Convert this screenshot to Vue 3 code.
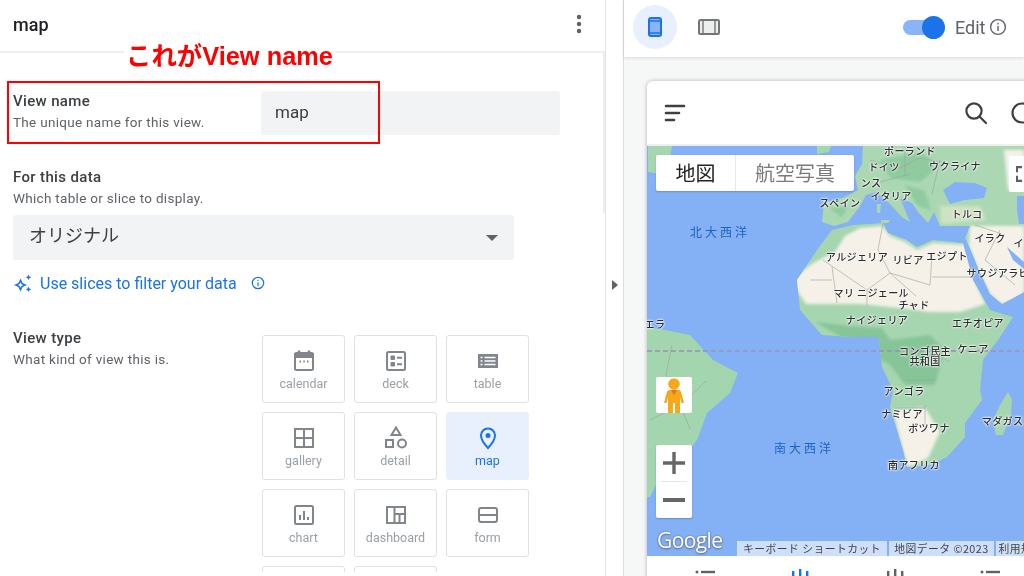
<template>
  <div class="page">
    <section class="editor">
      <header class="editor-head">
        <h1>map</h1>
        <svg class="more" width="6" height="20" viewBox="0 0 6 20"><circle cx="3" cy="3" r="2.2" /><circle cx="3" cy="10" r="2.2" /><circle cx="3" cy="17" r="2.2" /></svg>
      </header>
      <div class="scrollthumb"></div>
      <div class="editor-body">
        <div class="row name-row">
          <div class="field-text">
            <div class="label">View name</div>
            <div class="desc">The unique name for this view.</div>
          </div>
          <div class="input">map</div>
        </div>

        <div class="data-block">
          <div class="label">For this data</div>
          <div class="desc">Which table or slice to display.</div>
          <div class="select">
            <span>オリジナル</span>
            <i class="caret"></i>
          </div>
          <div class="link">
            <svg width="20" height="20" viewBox="0 0 20 20" fill="#1a73e8">
              <path d="M7.5 5.5 9.6 10l4.4 2-4.4 2-2.1 4.500L5.4 14 1 12l4.4-2zM7.5 9.3 6.700 11l-1.800 1 1.800.9.8 1.800.8-1.800 1.800-.9-1.800-1z" />
              <path d="M15.500 1.500l.9 1.900 1.900.9-1.900.9-.9 1.900-.9-1.900-1.900-.9 1.900-.9zM15.500 13.500l.9 1.900 1.900.9-1.900.9-.9 1.900-.9-1.900-1.900-.9 1.900-.9z" />
            </svg>
            <span class="link-text">Use slices to filter your data</span>
            <svg class="link-info" width="14" height="14" viewBox="0 0 14 14" fill="none" stroke="#1a73e8" stroke-width="1.2"><circle cx="7" cy="7" r="5.700" /><path d="M7 6.200V10.200M7 3.800v1.200" /></svg>
          </div>
        </div>

        <div class="row type-row">
          <div class="field-text type-text">
            <div class="label">View type</div>
            <div class="desc">What kind of view this is.</div>
          </div>
          <div class="tiles">
            <div v-for="t in tiles" :key="t.name" class="tile" :class="{ active: t.name === 'map', stub: !t.icon }">
              <svg width="24" height="24" viewBox="0 0 24 24" fill="none" stroke="currentColor" stroke-width="2" v-html="t.icon"></svg>
              <span v-if="t.icon">{{ t.name }}</span>
            </div>
          </div>
        </div>
      </div>
    </section>

    <div class="splitter"><i></i></div>

    <section class="preview">
      <div class="toolbar">
        <div class="device on">
          <svg width="14" height="20" viewBox="0 0 14 20"><rect x="1" y="1" width="12" height="18" rx="2" fill="#8ab4f8" stroke="#1a73e8" stroke-width="2" /><path d="M1 4h12M1 16h12" stroke="#1a73e8" stroke-width="1.400" /></svg>
        </div>
        <div class="device">
          <svg width="22" height="16" viewBox="0 0 22 16"><rect x="1" y="1" width="20" height="14" rx="1.500" fill="#eceded" stroke="#757575" stroke-width="2" /><path d="M5 1v14M17 1v14" stroke="#757575" stroke-width="1.400" /></svg>
        </div>
        <div class="edit-toggle">
          <div class="switch"><i></i></div>
          <span>Edit</span>
          <svg width="18" height="18" viewBox="0 0 18 18" fill="none" stroke="#5f6368" stroke-width="1.400"><circle cx="9" cy="9" r="7.400" /><path d="M9 8v5M9 4.800v1.600" /></svg>
        </div>
      </div>

      <div class="stage">
        <div class="phone">
          <div class="phone-head">
            <svg width="22" height="18" viewBox="0 0 22 18" stroke="#3c4043" stroke-width="2.600" stroke-linecap="round"><path d="M2 2h18M2 9h13M2 16h8" /></svg>
            <svg class="search" width="26" height="26" viewBox="0 0 26 26" fill="none" stroke="#3c4043" stroke-width="2.200"><circle cx="11" cy="11" r="7.600" /><path d="M16.500 16.500 23 23" stroke-linecap="round" /></svg>
            <svg class="sync" width="24" height="24" viewBox="0 0 24 24" fill="none" stroke="#3c4043" stroke-width="2.200"><circle cx="12" cy="12" r="9.500" /></svg>
          </div>

          <div class="map">
            <svg class="map-art" width="377" height="410" viewBox="647 146 377 410">
              <defs>
                <filter id="soft" x="-20%" y="-20%" width="140%" height="140%"><feGaussianBlur stdDeviation="1.800" /></filter>
                <clipPath id="africa">
                  <path d="M832 230 853 225 883 223 888 233 907 240 917 247 933 240 963 243 967 258 973 280 990 310 1013 317 998 340 983 360 980 390 982 400 965 423 965 437 947 457 930 465 907 467 903 450 890 407 893 390 882 367 880 347 878 337 850 337 822 335 800 310 797 280 817 250z" />
                </clipPath>
                <clipPath id="eurasia">
                  <path d="M863 146H1024V292L1002 304 990 294 978 268 969 246 965 238 970 226 940 226 934 212 928 223 918 212 912 203 900 198 910 222 902 217 888 202 876 192 866 195 860 206 848 222 834 226 822 222 824 203 845 197 858 190 855 176 862 164z" />
                </clipPath>
              </defs>
              <rect x="647" y="146" width="377" height="410" fill="#84b0f5" />
              <!-- uk and ireland -->
              <path d="M817 146h14l-2 6-12 2zM648 146h24l-3 18-8 10-13-2z" fill="#a6d6b0" />
              <!-- europe, turkey, arabia -->
              <path d="M863 146H1024V292L1002 304 990 294 978 268 969 246 965 238 970 226 940 226 934 212 928 223 918 212 912 203 900 198 910 222 902 217 888 202 876 192 866 195 860 206 848 222 834 226 822 222 824 203 845 197 858 190 855 176 862 164z" fill="#abd8b3" />
              <g clip-path="url(#eurasia)">
                <g filter="url(#soft)">
                  <path d="M880 160l40-8 20 14-20 16-30-4zM905 185l20 6 6 20-14-6zM830 208l18-2-6 12z" fill="#8fcb9f" />
                  <path d="M940 206h40l6 14-45 4z" fill="#cfe3c2" />
                  <path d="M970 226h54v70l-22 8-12-10-12-26-9-22zM1004 150h20v40h-16z" fill="#f5f1e8" />
                </g>
              </g>
              <!-- black sea, caspian, gulf -->
              <path d="M943 190 955 182 975 183 987 188 984 198 965 200 950 204z" fill="#84b0f5" />
              <path d="M1017 196h7v28h-5l-2-14z" fill="#84b0f5" />
              <path d="M1007 247 1024 262V269L1013 260z" fill="#84b0f5" />
              <path d="M877 204h4l-1 9h-3zM881 220h9l-2 3h-7z" fill="#abd8b3" />
              <!-- africa -->
              <path d="M832 230 853 225 883 223 888 233 907 240 917 247 933 240 963 243 967 258 973 280 990 310 1013 317 998 340 983 360 980 390 982 400 965 423 965 437 947 457 930 465 907 467 903 450 890 407 893 390 882 367 880 347 878 337 850 337 822 335 800 310 797 280 817 250z" fill="#a6d6b0" />
              <g clip-path="url(#africa)">
                <g filter="url(#soft)">
                  <path d="M845 236 860 228 882 226 890 236 907 243 917 250 933 243 965 245 970 262 975 282 985 304 960 312 930 312 900 308 860 304 835 304 806 304 790 280 815 262 835 252z" fill="#f5f1e8" />
                  <path d="M815 322 850 326 882 328 890 340 930 335 945 350 935 385 905 385 890 365z" fill="#86c597" />
                  <path d="M893 410 925 408 940 432 928 458 908 467 903 450z" fill="#f5f1e8" />
                </g>
              </g>
              <path d="M1008 392 1012 400 1011 415 1003 435 996 435 993 420 1000 405z" fill="#a6d6b0" />
              <!-- south america -->
              <path d="M647 327 665 330 690 335 713 360 738 373 730 393 707 413 697 440 683 457 657 483 650 497 647 497z" fill="#a3d5ae" />
              <!-- borders -->
              <g fill="none" stroke="#97a29b" stroke-width=".6">
                <path d="M823 260 867 290 890 273 930 285 932 255M932 277H970M832 267 837 303M867 290V306M890 273 916 296M883 223 878 250 890 273M810 280H832M905 380h30M895 408h30M925 405v24M930 350l20 12M672 345l-6 30 24 22 16-16M650 420l30-15 10 24" />
                <path d="M870 160l30 8 20-10 30 6M880 182l30-8M905 150v26M940 160l-8 34M1000 230l-15 30 30 25M975 225l30 10" />
              </g>
              <path d="M647 351H1024" stroke="#9c8eb3" stroke-width="1.300" stroke-dasharray="5 3" />
            </svg>

            <span
              v-for="l in placeLabels"
              :key="l.text"
              class="place"
              :style="{ left: l.x + 'px', top: l.y + 'px' }"
            >{{ l.text }}</span>
            <span class="ocean" :style="{ left: '73px', top: '85px' }">北大西洋</span>
            <span class="ocean" :style="{ left: '157px', top: '301px' }">南大西洋</span>

            <div class="map-type">
              <span class="cur">地図</span>
              <span>航空写真</span>
            </div>
            <div class="fullscreen">
              <svg width="15" height="18" viewBox="0 0 15 18" fill="none" stroke="#5f5f5f" stroke-width="2.600"><path d="M1 7V1h6M1 11v6h6" /></svg>
            </div>
            <div class="pegman">
              <svg width="20" height="35" viewBox="0 0 20 35" fill="#f4a91d"><circle cx="10" cy="6" r="5.800" /><path d="M5.500 12h9q2 0 2.600 2L20 25h-2.600L16 19.500V35h-5V25H9v10H4V19.500L2.600 25H0l2.900-11q.6-2 2.600-2z" /><path d="M7 12h6l-3 5z" fill="#e5702a" /></svg>
            </div>
            <div class="zoom">
              <svg width="22" height="22" viewBox="0 0 22 22" fill="#666"><path d="M9.300 0h3.400v9.300H22v3.400h-9.300V22H9.300v-9.300H0V9.300h9.300z" /></svg>
              <i></i>
              <svg width="22" height="22" viewBox="0 0 22 22" fill="#666"><rect y="9" width="22" height="4" /></svg>
            </div>
            <div class="google">Google</div>
            <div class="attrib">
              <span class="a1">キーボード ショートカット</span>
              <span class="a2">地図データ ©2023</span>
              <span class="a3">利用規約</span>
            </div>
          </div>

          <div class="tabs">
            <svg width="20" height="20" viewBox="0 0 20 20" fill="#5f6368"><circle cx="2" cy="3" r="1.500" /><rect x="6" y="1.800" width="14" height="2.400" /></svg>
            <svg width="20" height="20" viewBox="0 0 20 20" fill="#1a73e8"><rect x="2" y="2" width="2.400" height="9" /><rect x="9" y="0" width="2.400" height="9" /><rect x="16" y="2" width="2.400" height="9" /></svg>
            <svg width="20" height="20" viewBox="0 0 20 20" fill="#5f6368"><rect x="2" y="2" width="2.400" height="9" /><rect x="9" y="0" width="2.400" height="9" /><rect x="16" y="2" width="2.400" height="9" /></svg>
            <svg width="20" height="20" viewBox="0 0 20 20" fill="#5f6368"><circle cx="2" cy="3" r="1.500" /><rect x="6" y="1.800" width="14" height="2.400" /></svg>
          </div>
        </div>
      </div>
    </section>

    <div class="note">これがView name</div>
    <div class="note-box"></div>
  </div>
</template>

<script setup>
const tiles = [
  { name: 'calendar', icon: '<rect x="3" y="4" width="18" height="17" rx="1.500"/><path d="M7 1.500V5M17 1.500V5" stroke-width="2.500"/><path d="M3 5h18v3H3z" fill="currentColor"/><path d="M7.500 12.500h1.500M11.300 12.500h1.500M15 12.500h1.500" />' },
  { name: 'deck', icon: '<rect x="3" y="3" width="18" height="18" rx="1.500"/><path d="M7 7h3.500v3.500H7zM7 13.500h3.500V17H7z" fill="currentColor" stroke-width="1"/><path d="M13 8.700h5M13 15.200h5" />' },
  { name: 'table', icon: '<rect x="2" y="5" width="20" height="14" fill="currentColor" stroke="none"/><path d="M8.500 8.500h11M8.500 12h11M8.500 15.500h11M4.500 8.500h2M4.500 12h2M4.500 15.500h2" stroke="#fff" stroke-width="1.500"/>' },
  { name: 'gallery', icon: '<rect x="3" y="3" width="18" height="18"/><path d="M12 3v18M3 12h18" />' },
  { name: 'detail', icon: '<path d="M12 1.500 16.500 9h-9z"/><rect x="2" y="14" width="7" height="7"/><circle cx="18" cy="17.500" r="4"/>' },
  { name: 'map', icon: '<path d="M12 2.500c-3.900 0-7 3-7 6.900 0 5 7 12.600 7 12.600s7-7.600 7-12.600c0-3.900-3.100-6.900-7-6.900z"/><circle cx="12" cy="9.500" r="2.500" fill="currentColor" stroke="none"/>' },
  { name: 'chart', icon: '<rect x="3" y="3" width="18" height="18" rx="1.500"/><path d="M8 12v5M12 8v9M16 14v3" />' },
  { name: 'dashboard', icon: '<rect x="3" y="4" width="18" height="16"/><path d="M10.500 4v16M10.500 11H21M15.500 11v9" />' },
  { name: 'form', icon: '<rect x="3" y="5" width="18" height="14" rx="2"/><path d="M3 12h18" />' },
  { name: 'more-a', icon: '' },
  { name: 'more-b', icon: '' }
];

const placeLabels = [
  { text: 'ポーランド', x: 263, y: 5 },
  { text: 'ドイツ', x: 237, y: 21 },
  { text: 'ウクライナ', x: 308, y: 20 },
  { text: 'ンス', x: 224, y: 37 },
  { text: 'イタリア', x: 244, y: 50 },
  { text: 'スペイン', x: 193, y: 57 },
  { text: 'トルコ', x: 320, y: 68 },
  { text: 'イラク', x: 343, y: 92 },
  { text: 'イラン', x: 382, y: 97 },
  { text: 'アルジェリア', x: 210, y: 111 },
  { text: 'リビア', x: 261, y: 114 },
  { text: 'エジプト', x: 300, y: 110 },
  { text: 'サウジアラビア', x: 356, y: 127 },
  { text: 'マリ', x: 197, y: 147 },
  { text: 'ニジェール', x: 236, y: 147 },
  { text: 'チャド', x: 267, y: 159 },
  { text: 'ナイジェリア', x: 230, y: 174 },
  { text: 'エチオピア', x: 331, y: 177 },
  { text: 'エラ', x: 8, y: 178 },
  { text: 'コンゴ民主\n共和国', x: 278, y: 210 },
  { text: 'ケニア', x: 326, y: 203 },
  { text: 'アンゴラ', x: 257, y: 245 },
  { text: 'ナミビア', x: 255, y: 268 },
  { text: 'ボツワナ', x: 282, y: 282 },
  { text: '南アフリカ', x: 267, y: 319 },
  { text: 'マダガスカル', x: 366, y: 275 }
];
</script>

<style>
html, body { margin: 0; background: #fff; }
</style>

<style scoped>
.page {
  position: relative;
  display: flex;
  width: 1024px;
  height: 576px;
  overflow: hidden;
  background: #fff;
  font-family: Roboto, "Noto Sans CJK JP", sans-serif;
  color: #3c4043;
  filter: blur(.4px);
}

/* left panel */
.editor {
  position: relative;
  width: 605px;
  height: 576px;
  border-right: 1px solid #e3e4e6;
  flex: none;
}
.editor-head {
  display: flex;
  align-items: center;
  justify-content: space-between;
  height: 53px;
  padding: 0 23px 3px 13px;
  box-sizing: border-box;
  border-bottom: 2px solid #eeeff0;
}
.editor-head h1 {
  margin: 0;
  font-size: 18px;
  font-weight: 500;
  color: #202124;
}
.more { fill: #5f6368; }
.scrollthumb {
  position: absolute;
  right: 0;
  top: 53px;
  width: 2px;
  height: 160px;
  background: #eceded;
}
.editor-body {
  height: 519px;
  padding: 38px 13px 0;
  box-sizing: border-box;
  overflow: hidden;
}
.row { display: flex; }
.field-text { width: 248px; flex: none; }
.label {
  font-size: 15px;
  line-height: 18px;
  font-weight: 500;
  letter-spacing: .35px;
  color: #3c4043;
  padding-top: 1px;
}
.desc {
  margin-top: 3px;
  font-size: 13.500px;
  line-height: 18px;
  letter-spacing: .3px;
  color: #5f6368;
}
.input {
  width: 299px;
  height: 44px;
  padding-left: 14px;
  box-sizing: border-box;
  border-radius: 3px;
  background: #f1f3f4;
  font-size: 17px;
  line-height: 42px;
  color: #3c4043;
}
.data-block { margin-top: 32px; }
.select {
  display: flex;
  align-items: center;
  justify-content: space-between;
  width: 501px;
  height: 45px;
  margin-top: 8px;
  padding: 0 16px 7px;
  box-sizing: border-box;
  border-radius: 3px;
  background: #f1f3f4;
  font-size: 18px;
  color: #3c4043;
}
.caret {
  width: 0;
  height: 0;
  border-left: 6px solid transparent;
  border-right: 6px solid transparent;
  border-top: 6px solid #5f6368;
  margin-top: 7px;
}
.link {
  display: flex;
  align-items: center;
  height: 20px;
  margin-top: 13px;
  color: #1a73e8;
  font-size: 16px;
}
.link-text { margin-left: 7px; }
.link-info { margin-left: 14px; }
.type-row { margin-top: 35px; }
.type-text { width: 249px; }
.tiles {
  display: grid;
  grid-template-columns: repeat(3, 83px);
  grid-auto-rows: 68px;
  gap: 9px;
  padding-top: 7px;
}
.tile {
  display: flex;
  flex-direction: column;
  align-items: center;
  padding-top: 13px;
  box-sizing: border-box;
  border: 1px solid #dfe1e3;
  border-radius: 3px;
  color: #80868b;
}
.tile span {
  margin-top: 3px;
  font-size: 12.500px;
  line-height: 16px;
  color: #9aa0a6;
}
.tile.active {
  background: #e8f0fe;
  border-color: #e8f0fe;
  color: #1a73e8;
}
.tile.active span { color: #1a73e8; }

.splitter {
  display: flex;
  align-items: center;
  justify-content: center;
  width: 17px;
  flex: none;
  background: #fff;
}
.splitter i {
  margin-left: 1px;
  border-top: 5px solid transparent;
  border-bottom: 5px solid transparent;
  border-left: 6px solid #5f6368;
  margin-top: -6px;
}

/* right panel */
.preview {
  flex: 1;
  min-width: 0;
  display: flex;
  flex-direction: column;
  border-left: 1px solid #dcdddf;
}
.toolbar {
  position: relative;
  display: flex;
  align-items: center;
  gap: 10px;
  height: 57px;
  padding: 0 0 3px 9px;
  box-sizing: border-box;
  box-shadow: 0 1px 3px rgba(60, 64, 67, .16);
}
.device {
  display: flex;
  align-items: center;
  justify-content: center;
  width: 44px;
  height: 44px;
  border-radius: 50%;
}
.device.on { background: #e8f0fe; }
.edit-toggle {
  display: flex;
  align-items: center;
  margin-left: 162px;
  font-size: 18px;
  color: #5f6368;
}
.edit-toggle span { margin-left: 18px; }
.edit-toggle svg { margin-left: 4px; }
.switch {
  position: relative;
  width: 34px;
  height: 15px;
  border-radius: 8px;
  background: #8ab4f8;
}
.switch i {
  position: absolute;
  right: -8px;
  top: -4px;
  width: 23px;
  height: 23px;
  border-radius: 50%;
  background: #1a73e8;
}
.stage {
  flex: 1;
  min-height: 0;
  padding: 24px 0 0 23px;
  background: #f6f7f7;
  overflow: hidden;
}
.phone {
  width: 420px;
  height: 500px;
  border-radius: 6px 0 0 0;
  background: #fff;
  box-shadow: 0 0 4px rgba(0, 0, 0, .28);
  overflow: hidden;
}
.phone-head {
  display: flex;
  align-items: center;
  height: 65px;
  padding: 0 0 0 17px;
  box-sizing: border-box;
  border-bottom: 2px solid #eeeff0;
}
.search { margin-left: 277px; }
.sync { margin-left: 21px; }

/* the map is a free canvas: everything in it is placed by map position */
.map {
  position: relative;
  width: 377px;
  height: 410px;
  overflow: hidden;
  background: #84b0f5;
}
.map-art { display: block; }
.place {
  position: absolute;
  transform: translate(-50%, -50%);
  white-space: pre;
  text-align: center;
  font-family: "Noto Sans CJK JP", sans-serif;
  font-size: 10px;
  font-weight: 500;
  letter-spacing: .4px;
  line-height: 10px;
  color: #2c2c2c;
  text-shadow: 0 0 2px #fff, 0 0 2px #fff, 0 0 3px #fff;
}
.ocean {
  position: absolute;
  transform: translate(-50%, -50%);
  white-space: nowrap;
  font-family: "Noto Sans CJK JP", sans-serif;
  font-size: 12px;
  letter-spacing: 3px;
  color: #1c62c4;
}
.map-type {
  position: absolute;
  left: 9px;
  top: 9px;
  display: flex;
  height: 36px;
  background: #fff;
  border-radius: 2px;
  font-family: "Noto Sans CJK JP", sans-serif;
  font-size: 20px;
  line-height: 36px;
  color: #7a7a7a;
  box-shadow: 0 1px 2px rgba(0, 0, 0, .2);
}
.map-type span { padding: 0 19px; }
.map-type .cur {
  width: 80px;
  padding: 0;
  text-align: center;
  box-sizing: border-box;
  color: #222;
  border-right: 1px solid #e8e8e8;
}
.fullscreen {
  position: absolute;
  left: 362px;
  top: 10px;
  display: flex;
  align-items: center;
  width: 20px;
  height: 36px;
  padding-left: 7px;
  box-sizing: border-box;
  background: #fff;
  border-radius: 2px;
}
.pegman {
  position: absolute;
  left: 9px;
  top: 231px;
  display: flex;
  justify-content: center;
  align-items: center;
  width: 36px;
  height: 36px;
  background: #fff;
  border-radius: 2px;
}
.zoom {
  position: absolute;
  left: 9px;
  top: 299px;
  display: flex;
  flex-direction: column;
  align-items: center;
  justify-content: space-between;
  width: 36px;
  height: 73px;
  padding: 7px 0;
  box-sizing: border-box;
  background: #fff;
  border-radius: 2px;
  box-shadow: 0 1px 2px rgba(0, 0, 0, .2);
}
.zoom i {
  width: 26px;
  height: 1px;
  background: #e6e6e6;
}
.google {
  position: absolute;
  left: 10px;
  top: 381px;
  font-family: "Open Sans", sans-serif;
  font-size: 21px;
  font-weight: 500;
  letter-spacing: -.6px;
  line-height: 27px;
  color: #fff;
  text-shadow: 0 0 2px #5f6f88, 0 1px 2px #5f6f88;
}
.attrib {
  position: absolute;
  left: 90px;
  top: 395px;
  display: flex;
  gap: 2px;
  height: 15px;
  font-family: "Noto Sans CJK JP", sans-serif;
  font-size: 10.800px;
  line-height: 15px;
  letter-spacing: .45px;
  color: #444;
  white-space: nowrap;
}
.attrib span {
  background: rgba(255, 255, 255, .6);
  text-align: center;
  box-sizing: border-box;
}
.a1 { width: 150px; }
.a2 { width: 105px; }
.a3 { width: 50px; }
.tabs {
  display: flex;
  gap: 75px;
  padding: 13px 0 0 48px;
}

/* annotation drawn over the screenshot */
.note {
  position: absolute;
  left: 124px;
  top: 40px;
  padding: 0 2px;
  background: #fff;
  font-family: "Liberation Sans", "Noto Sans CJK JP", sans-serif;
  font-size: 25.400px;
  font-weight: 700;
  line-height: 33px;
  color: #f00;
  white-space: nowrap;
}
.note-box {
  position: absolute;
  left: 7px;
  top: 81px;
  width: 373px;
  height: 63px;
  box-sizing: border-box;
  border: 2px solid #f00;
}
</style>
